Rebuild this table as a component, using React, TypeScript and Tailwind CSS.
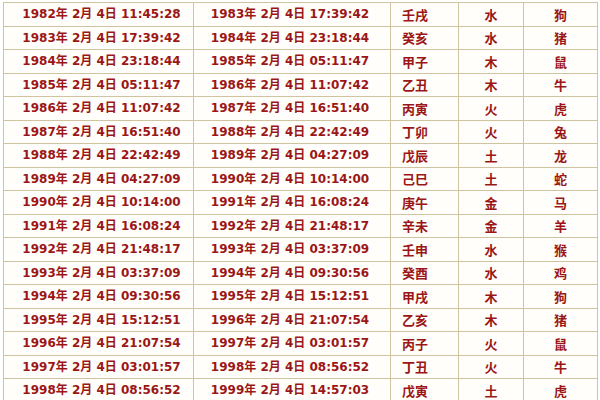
import React from "react";

const rows: [string, string, string, string, string][] = [
  ["1982年 2月 4日 11:45:28", "1983年 2月 4日 17:39:42", "壬戌", "水", "狗"],
  ["1983年 2月 4日 17:39:42", "1984年 2月 4日 23:18:44", "癸亥", "水", "猪"],
  ["1984年 2月 4日 23:18:44", "1985年 2月 4日 05:11:47", "甲子", "木", "鼠"],
  ["1985年 2月 4日 05:11:47", "1986年 2月 4日 11:07:42", "乙丑", "木", "牛"],
  ["1986年 2月 4日 11:07:42", "1987年 2月 4日 16:51:40", "丙寅", "火", "虎"],
  ["1987年 2月 4日 16:51:40", "1988年 2月 4日 22:42:49", "丁卯", "火", "兔"],
  ["1988年 2月 4日 22:42:49", "1989年 2月 4日 04:27:09", "戊辰", "土", "龙"],
  ["1989年 2月 4日 04:27:09", "1990年 2月 4日 10:14:00", "己巳", "土", "蛇"],
  ["1990年 2月 4日 10:14:00", "1991年 2月 4日 16:08:24", "庚午", "金", "马"],
  ["1991年 2月 4日 16:08:24", "1992年 2月 4日 21:48:17", "辛未", "金", "羊"],
  ["1992年 2月 4日 21:48:17", "1993年 2月 4日 03:37:09", "壬申", "水", "猴"],
  ["1993年 2月 4日 03:37:09", "1994年 2月 4日 09:30:56", "癸酉", "水", "鸡"],
  ["1994年 2月 4日 09:30:56", "1995年 2月 4日 15:12:51", "甲戌", "木", "狗"],
  ["1995年 2月 4日 15:12:51", "1996年 2月 4日 21:07:54", "乙亥", "木", "猪"],
  ["1996年 2月 4日 21:07:54", "1997年 2月 4日 03:01:57", "丙子", "火", "鼠"],
  ["1997年 2月 4日 03:01:57", "1998年 2月 4日 08:56:52", "丁丑", "火", "牛"],
  ["1998年 2月 4日 08:56:52", "1999年 2月 4日 14:57:03", "戊寅", "土", "虎"],
];

export default function App() {
  return (
    <div
      className="w-[600px] h-[400px] overflow-hidden bg-white pl-[3px] pt-[2px]"
      style={{ fontFamily: '"DejaVu Sans", "Noto Sans CJK SC", sans-serif' }}
    >
      <table className="border-collapse text-[12px] font-bold text-[#9b1616]">
        <tbody>
          {rows.map((r, i) => (
            <tr key={i} className="h-[23.5px] bg-[#fffefa]">
              <td className="w-[190px] border border-[#cfc4a0] text-center p-0 pl-[6px]">{r[0]}</td>
              <td className="w-[197px] border border-[#cfc4a0] text-center p-0 pr-[4px]">{r[1]}</td>
              <td className="w-[68px] border border-[#cfc4a0] text-left p-0 pl-[11px] text-[13px]" style={{ fontFamily: '"Noto Sans CJK SC", sans-serif' }}>{r[2]}</td>
              <td className="w-[65px] border border-[#cfc4a0] text-center p-0 text-[13px]" style={{ fontFamily: '"Noto Sans CJK SC", sans-serif' }}>{r[3]}</td>
              <td className="w-[74px] border border-[#cfc4a0] text-center p-0 text-[13px]" style={{ fontFamily: '"Noto Sans CJK SC", sans-serif' }}>{r[4]}</td>
            </tr>
          ))}
        </tbody>
      </table>
    </div>
  );
}
